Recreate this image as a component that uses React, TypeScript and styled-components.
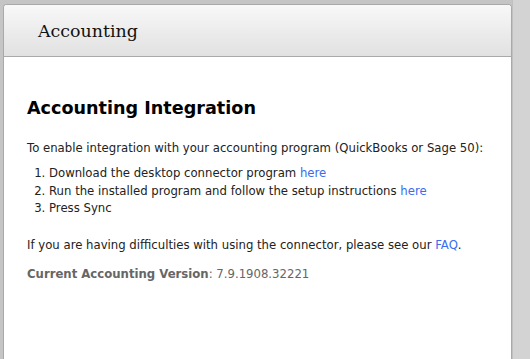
import React from "react";
import styled, { createGlobalStyle } from "styled-components";

const Global = createGlobalStyle`
  html, body { margin: 0; padding: 0; }
  body { background: #c5c5c5; width: 530px; height: 359px; overflow: hidden; }
`;

const Page = styled.div`
  display: grid;
  grid-template-columns: 1fr 18px;
  height: 359px;
  padding: 4px 0 0 3px;
  box-sizing: border-box;
`;

const Side = styled.div`
  background: #d3d3d3;
  margin-top: -4px;
  border-left: 1px solid #c0c0c0;
`;

const Panel = styled.section`
  background: #fff;
  border: 1px solid #a9a9a9;
  border-bottom: none;
  border-radius: 4px 4px 0 0;
  display: flex;
  flex-direction: column;
  overflow: hidden;
`;

const Header = styled.header`
  height: 51px;
  background: linear-gradient(#f8f8f8, #e1e1e1);
  border-bottom: 1px solid #a9a9a9;
  display: flex;
  align-items: center;
  padding-left: 34px;
`;

const HeaderTitle = styled.h1`
  margin: 0;
  font-family: "DejaVu Serif", Georgia, serif;
  font-weight: normal;
  font-size: 17.4px;
  color: #111;
`;

const Body = styled.div`
  padding: 41px 23px 0 23px;
  font-family: "DejaVu Sans", Verdana, sans-serif;
  font-size: 11.7px;
  color: #222;
`;

const Title = styled.h2`
  margin: 0 0 21px;
  font-size: 17.6px;
  font-weight: bold;
  color: #000;
`;

const Para = styled.p<{ $muted?: boolean; $gap?: number }>`
  margin: 0 0 ${(p) => p.$gap ?? 11}px;
  line-height: 18px;
  color: ${(p) => (p.$muted ? "#666" : "#222")};
`;

const List = styled.ol`
  margin: 0 0 18px;
  padding-left: 22px;
  line-height: 17.5px;
`;

const Link = styled.a`
  color: #3a6cf0;
  text-decoration: none;
`;

const Label = styled.b`
  color: #666;
`;

export default function App() {
  return (
    <>
      <Global />
      <Page>
        <Panel>
          <Header>
            <HeaderTitle>Accounting</HeaderTitle>
          </Header>
          <Body>
            <Title>Accounting Integration</Title>
            <Para $gap={8}>To enable integration with your accounting program (QuickBooks or Sage 50):</Para>
            <List>
              <li>Download the desktop connector program <Link href="#">here</Link></li>
              <li>Run the installed program and follow the setup instructions <Link href="#">here</Link></li>
              <li>Press Sync</li>
            </List>
            <Para>If you are having difficulties with using the connector, please see our <Link href="#">FAQ</Link>.</Para>
            <Para $muted><Label>Current Accounting Version</Label>: 7.9.1908.32221</Para>
          </Body>
        </Panel>
        <Side />
      </Page>
    </>
  );
}
